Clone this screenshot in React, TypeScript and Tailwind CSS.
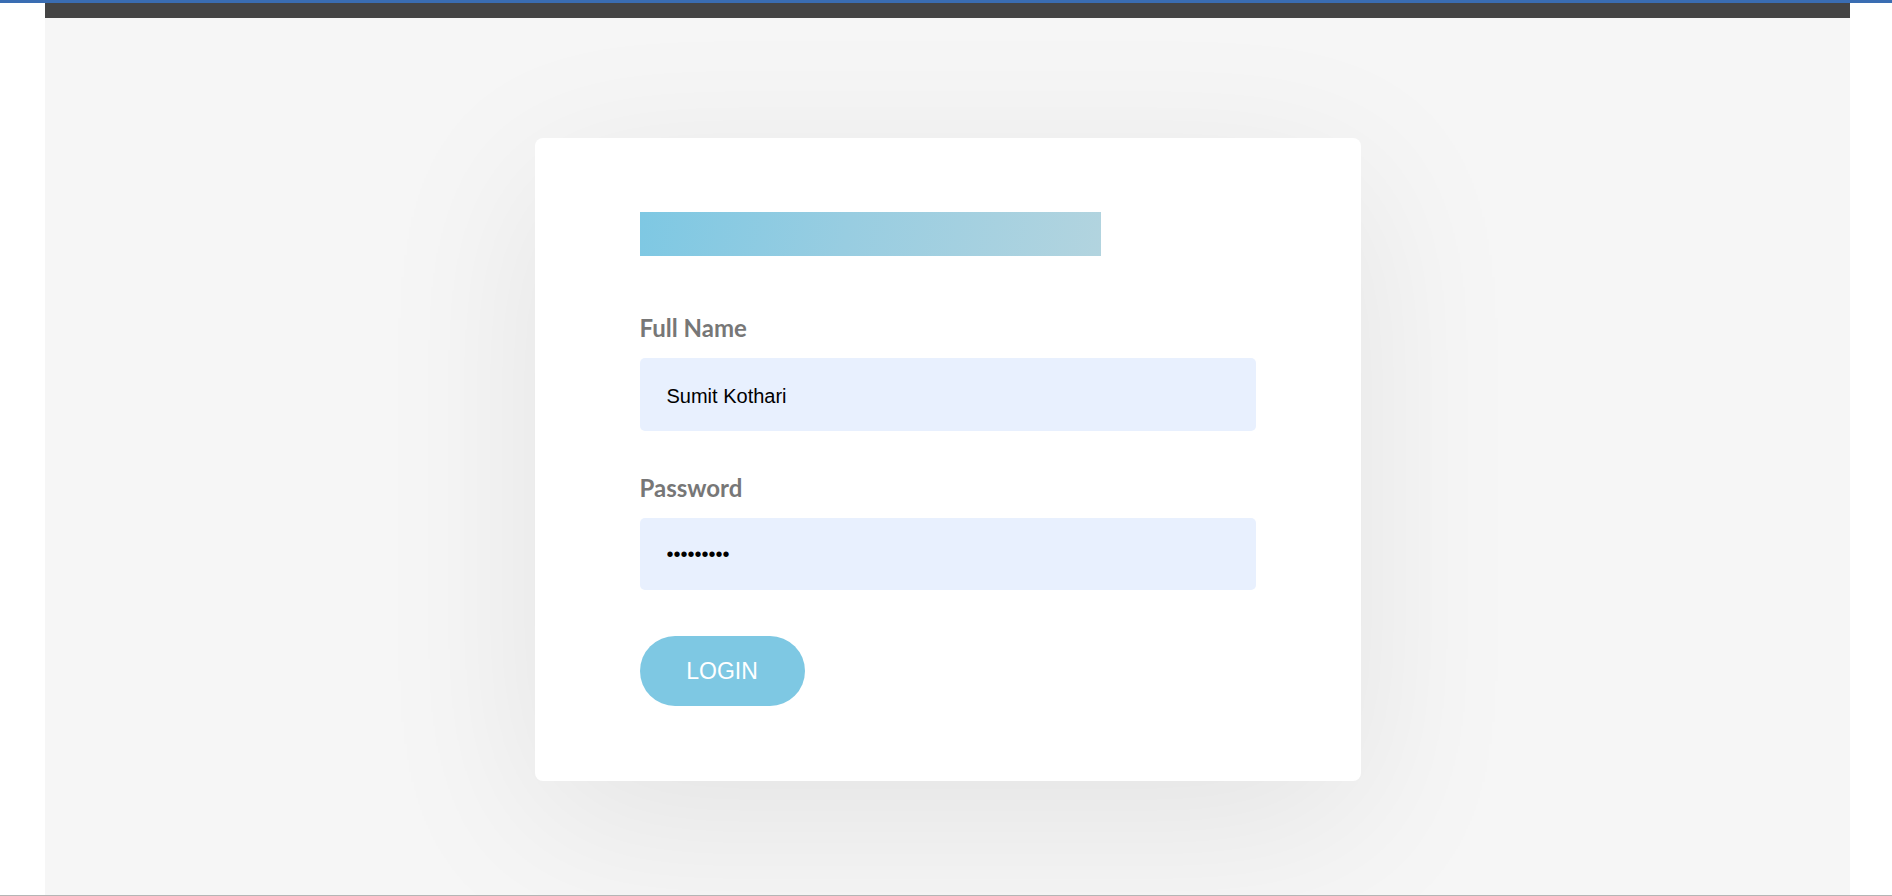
import React from "react";

export default function App() {
  return (
    <div className="h-screen w-full flex flex-col bg-white overflow-hidden">
      <div className="h-[3px] w-full bg-[#3a6db2] shrink-0" />
      <div className="flex-1 flex min-h-0">
        <div className="w-[45px] shrink-0 bg-white" />
        <div className="w-[1805px] shrink-0 flex flex-col">
          <div className="h-[15px] bg-[#444444] shrink-0" />
          <main className="flex-1 bg-[#f6f6f6] flex justify-center">
            <div className="mt-[120px] w-[826px] h-[643px] bg-white rounded-[8px] shadow-[0_40px_170px_rgba(0,0,0,0.08)] pt-[74px] px-[105px] pb-[75px] flex flex-col items-start">
              <div className="w-[461px] h-[45px] bg-[linear-gradient(100deg,#7ec8e3_0%,#98cde1_45%,#b2d4df_100%)]" />
              <form
                className="w-full flex flex-col"
                onSubmit={(e) => e.preventDefault()}
              >
                <label
                  className="mt-[58px] text-[24px] leading-[1.2] font-bold text-[#777777]"
                  style={{ fontFamily: "Lato, 'Open Sans', sans-serif" }}
                >
                  Full Name
                </label>
                <input
                  readOnly
                  value="Sumit Kothari"
                  className="mt-[15px] w-[616px] h-[73px] rounded-[5px] bg-[#e8f0fe] px-[27px] pt-[4px] text-[20px] text-black outline-none"
                  style={{ fontFamily: "'Liberation Sans', Arial, sans-serif" }}
                />
                <label
                  className="mt-[43px] text-[24px] leading-[1.2] font-bold text-[#777777]"
                  style={{ fontFamily: "Lato, 'Open Sans', sans-serif" }}
                >
                  Password
                </label>
                <input
                  readOnly
                  type="password"
                  value="123456789"
                  className="mt-[15px] w-[616px] h-[72px] rounded-[5px] bg-[#e8f0fe] px-[27px] text-[20px] text-black outline-none"
                  style={{ fontFamily: "'Liberation Sans', Arial, sans-serif" }}
                />
                <button
                  type="submit"
                  className="mt-[46px] w-[165px] h-[70px] rounded-full bg-[#7ec8e3] text-white text-[23px] leading-none"
                  style={{ fontFamily: "'Liberation Sans', Arial, sans-serif" }}
                >
                  LOGIN
                </button>
              </form>
            </div>
          </main>
        </div>
        <div className="flex-1 bg-white" />
      </div>
      <div className="h-px w-full bg-[#b5b5b5] shrink-0" />
    </div>
  );
}
